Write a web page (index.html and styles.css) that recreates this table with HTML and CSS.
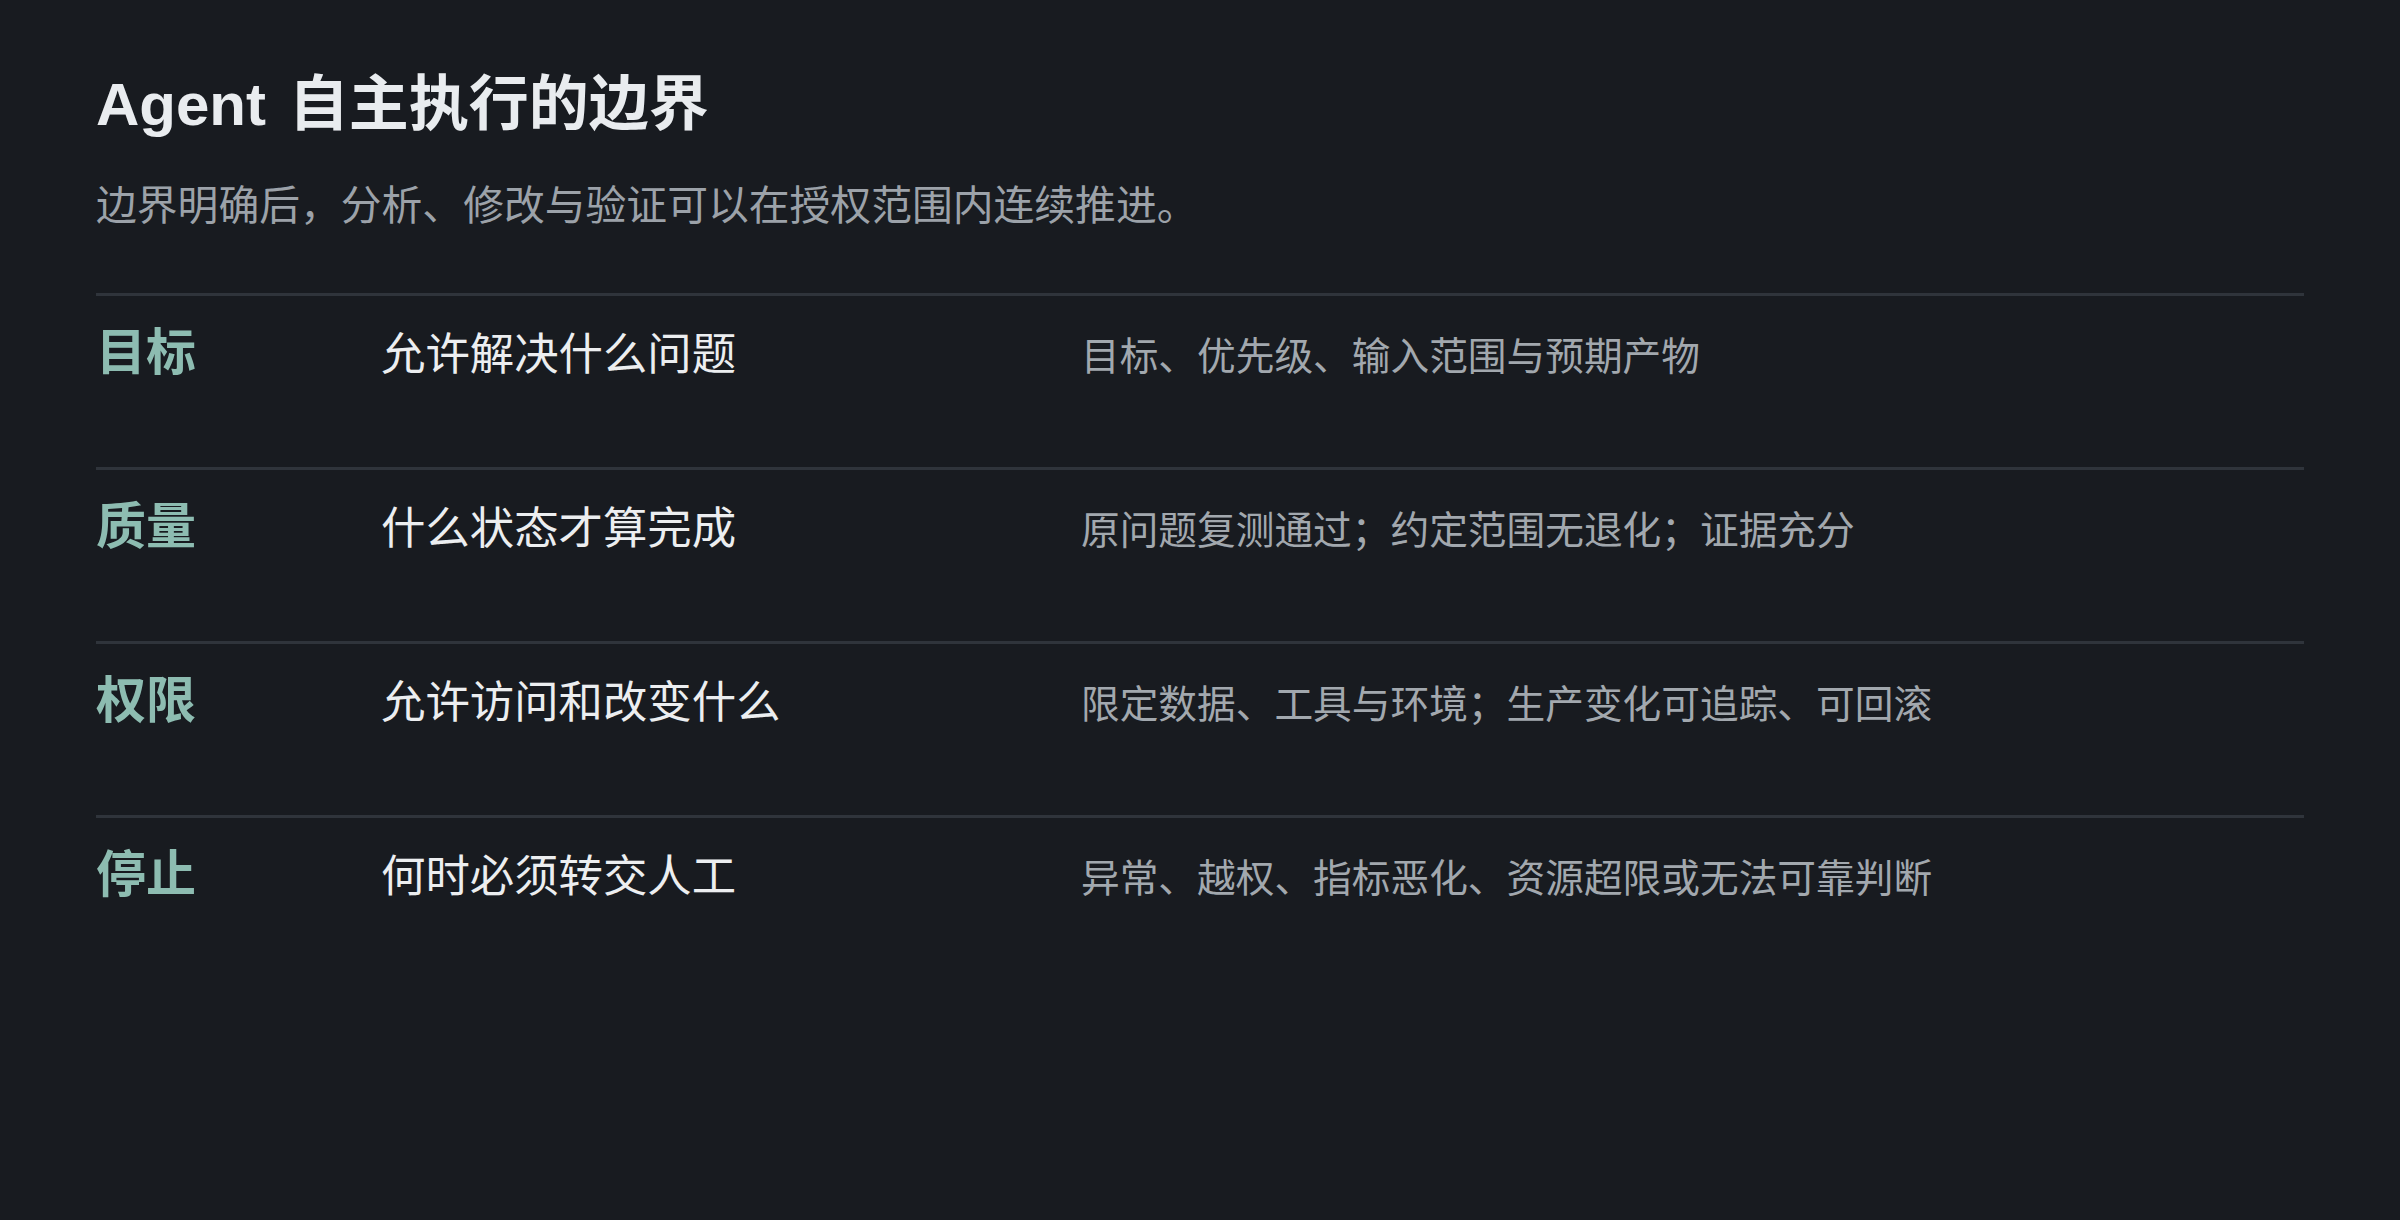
FILE: index.html
```html
<!DOCTYPE html>
<html lang="zh-CN">
<head>
    <meta charset="UTF-8">
    <meta name="viewport" content="width=device-width, initial-scale=1.0">
    <title>Agent 自主执行的边界</title>
    <link rel="stylesheet" href="styles.css">
</head>
<body>
    <main class="page">
        <header class="intro">
            <h1>Agent 自主执行的边界</h1>
            <p>边界明确后，分析、修改与验证可以在授权范围内连续推进。</p>
        </header>

        <section class="bounds">
            <div class="row">
                <span class="label">目标</span>
                <span class="question">允许解决什么问题</span>
                <span class="detail">目标、优先级、输入范围与预期产物</span>
            </div>
            <div class="row">
                <span class="label">质量</span>
                <span class="question">什么状态才算完成</span>
                <span class="detail">原问题复测通过；约定范围无退化；证据充分</span>
            </div>
            <div class="row">
                <span class="label">权限</span>
                <span class="question">允许访问和改变什么</span>
                <span class="detail">限定数据、工具与环境；生产变化可追踪、可回滚</span>
            </div>
            <div class="row">
                <span class="label">停止</span>
                <span class="question">何时必须转交人工</span>
                <span class="detail">异常、越权、指标恶化、资源超限或无法可靠判断</span>
            </div>
        </section>
    </main>
</body>
</html>
```

FILE: styles.css
```css
* {
    box-sizing: border-box;
    margin: 0;
    padding: 0;
}

html, body {
    height: 100%;
}

body {
    background-color: #181b20;
    color: #e8eaed;
    font-family: "Liberation Sans", "Noto Sans CJK SC", sans-serif;
}

.page {
    padding: 69px 96px 0;
}

.intro h1 {
    font-size: 60px;
    font-weight: 700;
    line-height: 1.2;
    word-spacing: 6px;
    color: #e9ecef;
}

.intro p {
    margin-top: 35px;
    font-size: 40.8px;
    line-height: 1.5;
    color: #9ca2a9;
}

.bounds {
    margin-top: 56px;
}

.row {
    display: grid;
    grid-template-columns: 285px 700px 1fr;
    align-items: baseline;
    height: 174px;
    padding-top: 20px;
    border-top: 3px solid #2f343b;
}

.label {
    font-size: 50px;
    font-weight: 700;
    line-height: 1.5;
    color: #8dbcb1;
}

.question {
    font-size: 44.4px;
    line-height: 1.5;
    color: #eceef0;
}

.detail {
    font-size: 38.7px;
    line-height: 1.5;
    color: #a2a8ae;
}
```
